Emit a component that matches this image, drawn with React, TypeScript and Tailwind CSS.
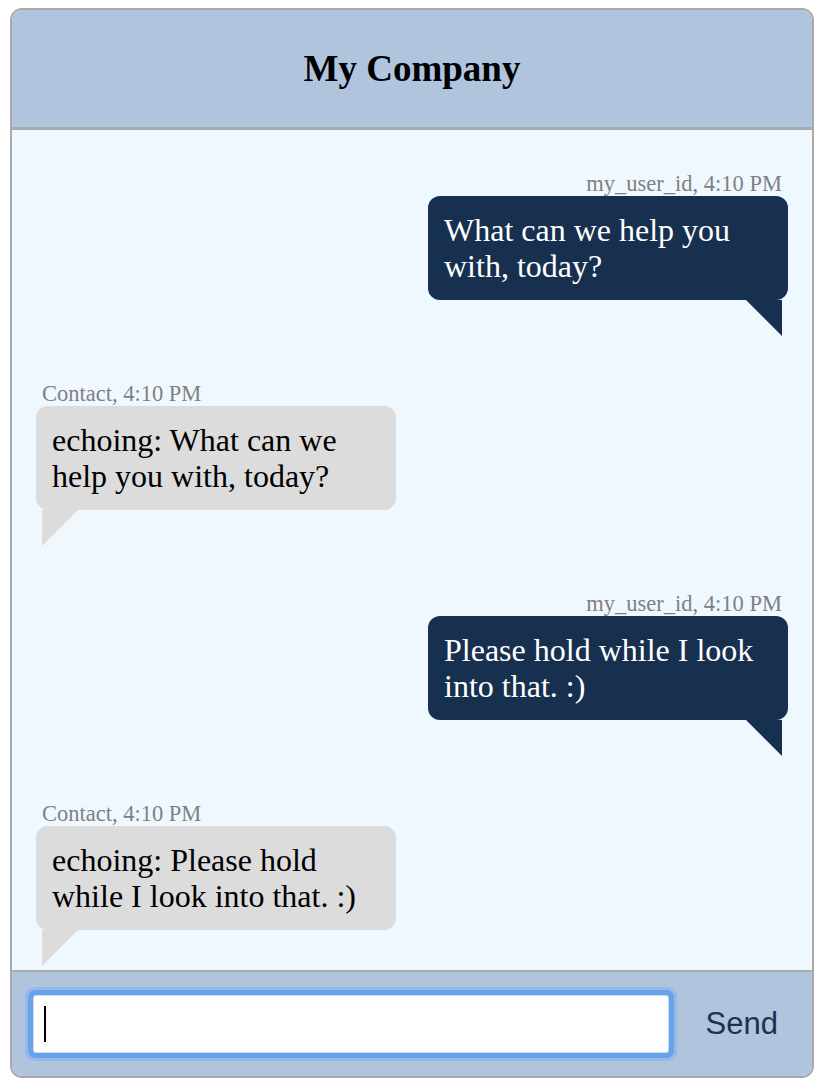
import React from 'react';

type Message = {
  id: number;
  from: 'me' | 'contact';
  author: string;
  time: string;
  text: string;
};

const messages: Message[] = [
  { id: 1, from: 'me', author: 'my_user_id', time: '4:10 PM', text: 'What can we help you with, today?' },
  { id: 2, from: 'contact', author: 'Contact', time: '4:10 PM', text: 'echoing: What can we help you with, today?' },
  { id: 3, from: 'me', author: 'my_user_id', time: '4:10 PM', text: 'Please hold while I look into that. :)' },
  { id: 4, from: 'contact', author: 'Contact', time: '4:10 PM', text: 'echoing: Please hold while I look into that. :)' },
];

const serif = "font-['Liberation_Serif','Times_New_Roman',serif]";

const ChatBubble: React.FC<{ message: Message }> = ({ message }) => {
  const mine = message.from === 'me';
  return (
    <div className={`flex flex-col ${mine ? 'items-end' : 'items-start'}`}>
      <div className={`px-[6px] text-[22.5px] leading-[24px] text-[#808080] ${serif}`}>
        {message.author}, {message.time}
      </div>
      <div
        className={`w-[360px] rounded-[12px] px-[16px] py-[16px] text-[32px] leading-[36px] ${serif} ${
          mine ? 'bg-[#17304f] text-white' : 'bg-[#dcdcdc] text-black'
        }`}
      >
        {message.text}
      </div>
      {mine ? (
        <div className="mr-[6px] h-0 w-0 border-t-[36px] border-l-[36px] border-t-[#17304f] border-l-transparent" />
      ) : (
        <div className="ml-[6px] h-0 w-0 border-t-[36px] border-r-[36px] border-t-[#dcdcdc] border-r-transparent" />
      )}
    </div>
  );
};

export default function App() {
  return (
    <div className="pl-[10px] pt-[8px]">
      <div className="flex h-[1070px] w-[804px] flex-col overflow-hidden rounded-[12px] border-2 border-[#a9a9a9]">
        <header className="flex h-[120px] shrink-0 items-center justify-center border-b-[3px] border-[#a9a9a9] bg-[#b0c4de]">
          <h1 className={`text-[37px] font-bold text-black ${serif}`}>My Company</h1>
        </header>

        <main className="flex h-[840px] shrink-0 flex-col gap-[46px] overflow-hidden bg-[#f0f8ff] px-[24px] pt-[42px]">
          {messages.map((m) => (
            <ChatBubble key={m.id} message={m} />
          ))}
        </main>

        <footer className="flex h-[106px] shrink-0 items-center border-t-2 border-[#a9a9a9] bg-[#b0c4de] pl-[21px] pr-[34px]">
          <div className="relative">
            <input
              type="text"
              aria-label="Message"
              className="h-[58px] w-[636px] rounded-[3px] border border-[#c6dbf4] bg-white px-[10px] caret-transparent outline-none shadow-[0_0_0_5px_#67a2ea,0_0_0_8px_#93bbea]"
            />
            <span className="absolute left-[11px] top-[11px] h-[36px] w-[2px] bg-black" />
          </div>
          <button className="ml-auto font-['Liberation_Sans',Arial,sans-serif] text-[31px] text-[#1c3150]">
            Send
          </button>
        </footer>
      </div>
    </div>
  );
}
